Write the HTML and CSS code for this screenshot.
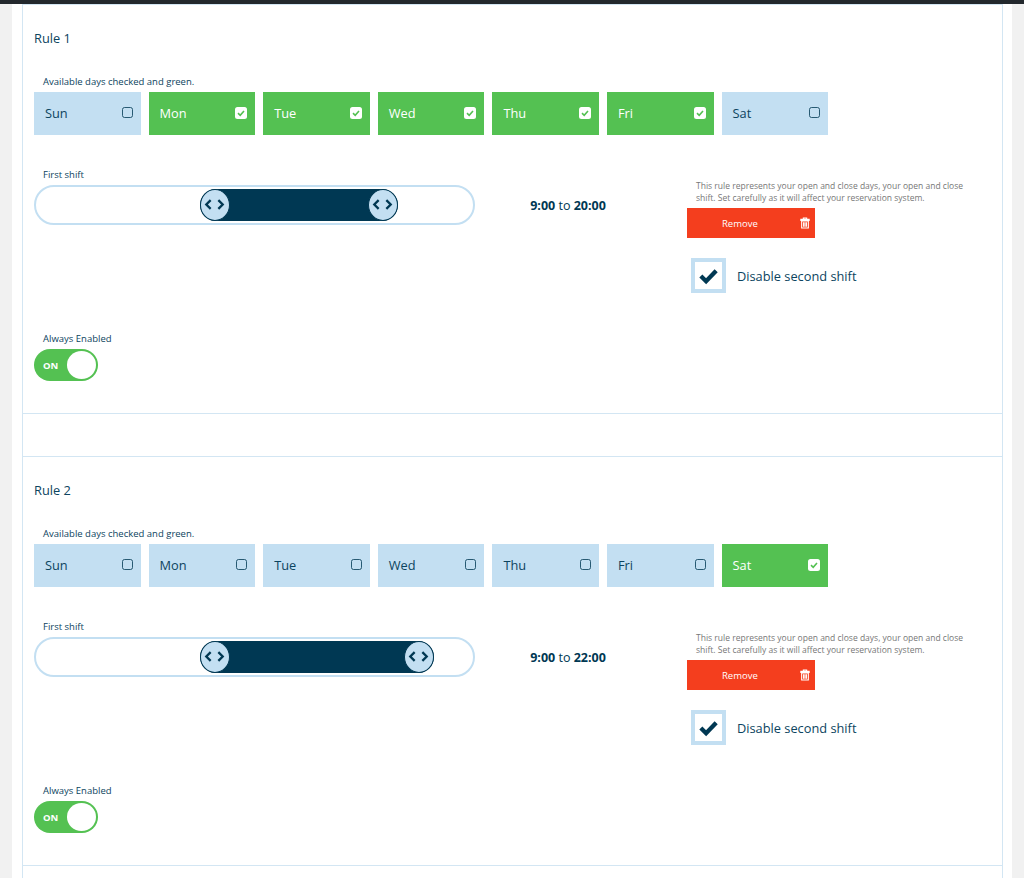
FILE: index.html
```html
<!DOCTYPE html>
<html lang="en">
<head>
    <meta charset="UTF-8">
    <title>Rules</title>
    <link rel="stylesheet" href="styles.css">
</head>
<body>
    <div class="top-bar"></div>
    <div class="page">
        <div class="rules">
            <!-- Rule 1 -->
            <section class="rule">
                <h2>Rule 1</h2>
                <p class="field-label">Available days checked and green.</p>
                <div class="days">
                    <div class="day"><span>Sun</span><i class="box"></i></div>
                    <div class="day on"><span>Mon</span><i class="box"><svg viewBox="0 0 12 12"><path d="M3 6.2 5.2 8.3 9 4"/></svg></i></div>
                    <div class="day on"><span>Tue</span><i class="box"><svg viewBox="0 0 12 12"><path d="M3 6.2 5.2 8.3 9 4"/></svg></i></div>
                    <div class="day on"><span>Wed</span><i class="box"><svg viewBox="0 0 12 12"><path d="M3 6.2 5.2 8.3 9 4"/></svg></i></div>
                    <div class="day on"><span>Thu</span><i class="box"><svg viewBox="0 0 12 12"><path d="M3 6.2 5.2 8.3 9 4"/></svg></i></div>
                    <div class="day on"><span>Fri</span><i class="box"><svg viewBox="0 0 12 12"><path d="M3 6.2 5.2 8.3 9 4"/></svg></i></div>
                    <div class="day"><span>Sat</span><i class="box"></i></div>
                </div>
                <div class="shift-row">
                    <div class="shift-slider">
                        <p class="field-label">First shift</p>
                        <div class="slider">
                            <div class="range range-20">
                                <span class="handle"><svg viewBox="0 0 28 30"><path d="M10 10.500 5.500 15l4.500 4.500M18 10.500 22.500 15 18 19.500"/></svg></span>
                                <span class="handle"><svg viewBox="0 0 28 30"><path d="M10 10.500 5.500 15l4.500 4.500M18 10.500 22.500 15 18 19.500"/></svg></span>
                            </div>
                        </div>
                    </div>
                    <div class="shift-time"><b>9:00</b> to <b>20:00</b></div>
                    <div class="shift-side">
                        <p class="note">This rule represents your open and close days, your open and close shift. Set carefully as it will affect your reservation system.</p>
                        <button class="remove"><span>Remove</span><svg viewBox="0 0 12 14"><path class="trash" d="M1 2.500h10v1.300H1zM4 2.500V1h4v1.500M2 4.500h8V13H2zM4.300 6v5.500M6 6v5.500M7.700 6v5.500"/></svg></button>
                        <div class="disable">
                            <i class="big-check"><svg viewBox="0 0 24 24"><path d="M4 12.500 9.500 18 20 7"/></svg></i>
                            <span>Disable second shift</span>
                        </div>
                    </div>
                </div>
                <p class="field-label">Always Enabled</p>
                <div class="toggle"><span>ON</span><i></i></div>
            </section>

            <div class="spacer"></div>

            <!-- Rule 2 -->
            <section class="rule">
                <h2>Rule 2</h2>
                <p class="field-label">Available days checked and green.</p>
                <div class="days">
                    <div class="day"><span>Sun</span><i class="box"></i></div>
                    <div class="day"><span>Mon</span><i class="box"></i></div>
                    <div class="day"><span>Tue</span><i class="box"></i></div>
                    <div class="day"><span>Wed</span><i class="box"></i></div>
                    <div class="day"><span>Thu</span><i class="box"></i></div>
                    <div class="day"><span>Fri</span><i class="box"></i></div>
                    <div class="day on"><span>Sat</span><i class="box"><svg viewBox="0 0 12 12"><path d="M3 6.2 5.2 8.3 9 4"/></svg></i></div>
                </div>
                <div class="shift-row">
                    <div class="shift-slider">
                        <p class="field-label">First shift</p>
                        <div class="slider">
                            <div class="range range-22">
                                <span class="handle"><svg viewBox="0 0 28 30"><path d="M10 10.500 5.500 15l4.500 4.500M18 10.500 22.500 15 18 19.500"/></svg></span>
                                <span class="handle"><svg viewBox="0 0 28 30"><path d="M10 10.500 5.500 15l4.500 4.500M18 10.500 22.500 15 18 19.500"/></svg></span>
                            </div>
                        </div>
                    </div>
                    <div class="shift-time"><b>9:00</b> to <b>22:00</b></div>
                    <div class="shift-side">
                        <p class="note">This rule represents your open and close days, your open and close shift. Set carefully as it will affect your reservation system.</p>
                        <button class="remove"><span>Remove</span><svg viewBox="0 0 12 14"><path class="trash" d="M1 2.500h10v1.300H1zM4 2.500V1h4v1.500M2 4.500h8V13H2zM4.300 6v5.500M6 6v5.500M7.700 6v5.500"/></svg></button>
                        <div class="disable">
                            <i class="big-check"><svg viewBox="0 0 24 24"><path d="M4 12.500 9.500 18 20 7"/></svg></i>
                            <span>Disable second shift</span>
                        </div>
                    </div>
                </div>
                <p class="field-label">Always Enabled</p>
                <div class="toggle"><span>ON</span><i></i></div>
            </section>

            <div class="spacer"></div>
        </div>
    </div>
</body>
</html>
```

FILE: styles.css
```css
* {
    margin: 0;
    padding: 0;
    box-sizing: border-box;
}

html, body {
    height: 878px;
    overflow: hidden;
}

body {
    background: #f1f1f1;
    color: #0c4460;
    font-family: "Open Sans", "Noto Sans", sans-serif;
}

.top-bar {
    height: 4px;
    background: #23282d;
}

.page {
    margin: 0 12px;
    padding: 0 9px 0 10px;
    background: white;
    height: 874px;
}

.rules {
    border: 1px solid #d3e6f3;
    border-width: 1px 1px 0 1px;
}

.rule {
    height: 409px;
    padding: 24px 12px 0 11px;
    border-bottom: 1px solid #d3e6f3;
}

.rule h2 {
    font-size: 12.800px;
    line-height: 18px;
    font-weight: 500;
    margin-bottom: 28px;
}

.field-label {
    font-size: 9.500px;
    line-height: 14px;
    padding-left: 9px;
    margin-bottom: 3px;
}

.days {
    display: flex;
    gap: 8px;
}

.day {
    width: 106.600px;
    height: 43px;
    background: #c3dff2;
    display: flex;
    align-items: center;
    justify-content: space-between;
    padding: 0 8px 2px 11px;
    font-size: 12.800px;
}

.day.on {
    background: #54c152;
    color: white;
}

.box {
    width: 11px;
    height: 11px;
    border: 1.500px solid #003853;
    border-radius: 2.500px;
    opacity: 0.8;
}

.day.on .box {
    width: 12px;
    height: 12px;
    background: white;
    border: none;
    opacity: 1;
}

.box svg {
    display: block;
}

.box path {
    fill: none;
    stroke: #54c152;
    stroke-width: 1.600;
}

.shift-row {
    display: flex;
    margin-top: 33px;
    height: 164px;
}

.shift-slider {
    width: 441px;
}

.slider {
    height: 40px;
    border: 2px solid #c3dff2;
    border-radius: 20px;
    background: white;
    position: relative;
}

.range {
    position: absolute;
    top: 2px;
    height: 32px;
    background: #003853;
    border-radius: 16px;
    display: flex;
    justify-content: space-between;
}

.range-20 {
    left: 164px;
    width: 198px;
}

.range-22 {
    left: 164px;
    width: 234px;
}

.handle {
    width: 30px;
    height: 32px;
    border-radius: 50%;
    background: #c3dff2;
    border: 1.500px solid #003853;
}

.handle svg {
    display: block;
    width: 27px;
    height: 29px;
}

.handle path {
    fill: none;
    stroke: #003853;
    stroke-width: 2.400;
}

.shift-time {
    width: 212px;
    padding: 29px 26px 0 0;
    text-align: center;
    font-size: 12.500px;
    line-height: 18px;
    color: #003853;
}

.shift-time b {
    font-weight: 700;
}

.shift-side {
    width: 290px;
    padding-top: 12px;
}

.note {
    font-size: 8.530px;
    line-height: 12px;
    color: #777;
    padding-left: 9px;
}

.remove {
    display: flex;
    align-items: center;
    justify-content: space-between;
    width: 128px;
    height: 30px;
    margin-top: 4px;
    padding: 0 5px 0 35px;
    background: #f43e1e;
    border: none;
    color: white;
    font-family: inherit;
    font-size: 9.500px;
}

.remove svg {
    width: 10px;
    height: 12px;
}

.trash {
    fill: none;
    stroke: white;
    stroke-width: 1.300;
}

.disable {
    display: flex;
    align-items: center;
    gap: 11px;
    margin: 20px 0 0 4px;
    font-size: 12.800px;
}

.big-check {
    width: 35px;
    height: 35px;
    border: 4px solid #c3dff2;
    padding: 2px;
}

.big-check svg {
    display: block;
    width: 100%;
    height: 100%;
}

.big-check path {
    fill: none;
    stroke: #003853;
    stroke-width: 4.500;
}

.toggle {
    width: 64px;
    height: 32px;
    margin-top: 1px;
    border-radius: 16px;
    background: #54c152;
    display: flex;
    align-items: center;
    justify-content: space-between;
    padding: 0 2px 0 9px;
    color: white;
    font-size: 9.500px;
    font-weight: 700;
}

.toggle i {
    width: 29px;
    height: 28px;
    border-radius: 50%;
    background: white;
}

.spacer {
    height: 43px;
    border-bottom: 1px solid #d3e6f3;
}
```
